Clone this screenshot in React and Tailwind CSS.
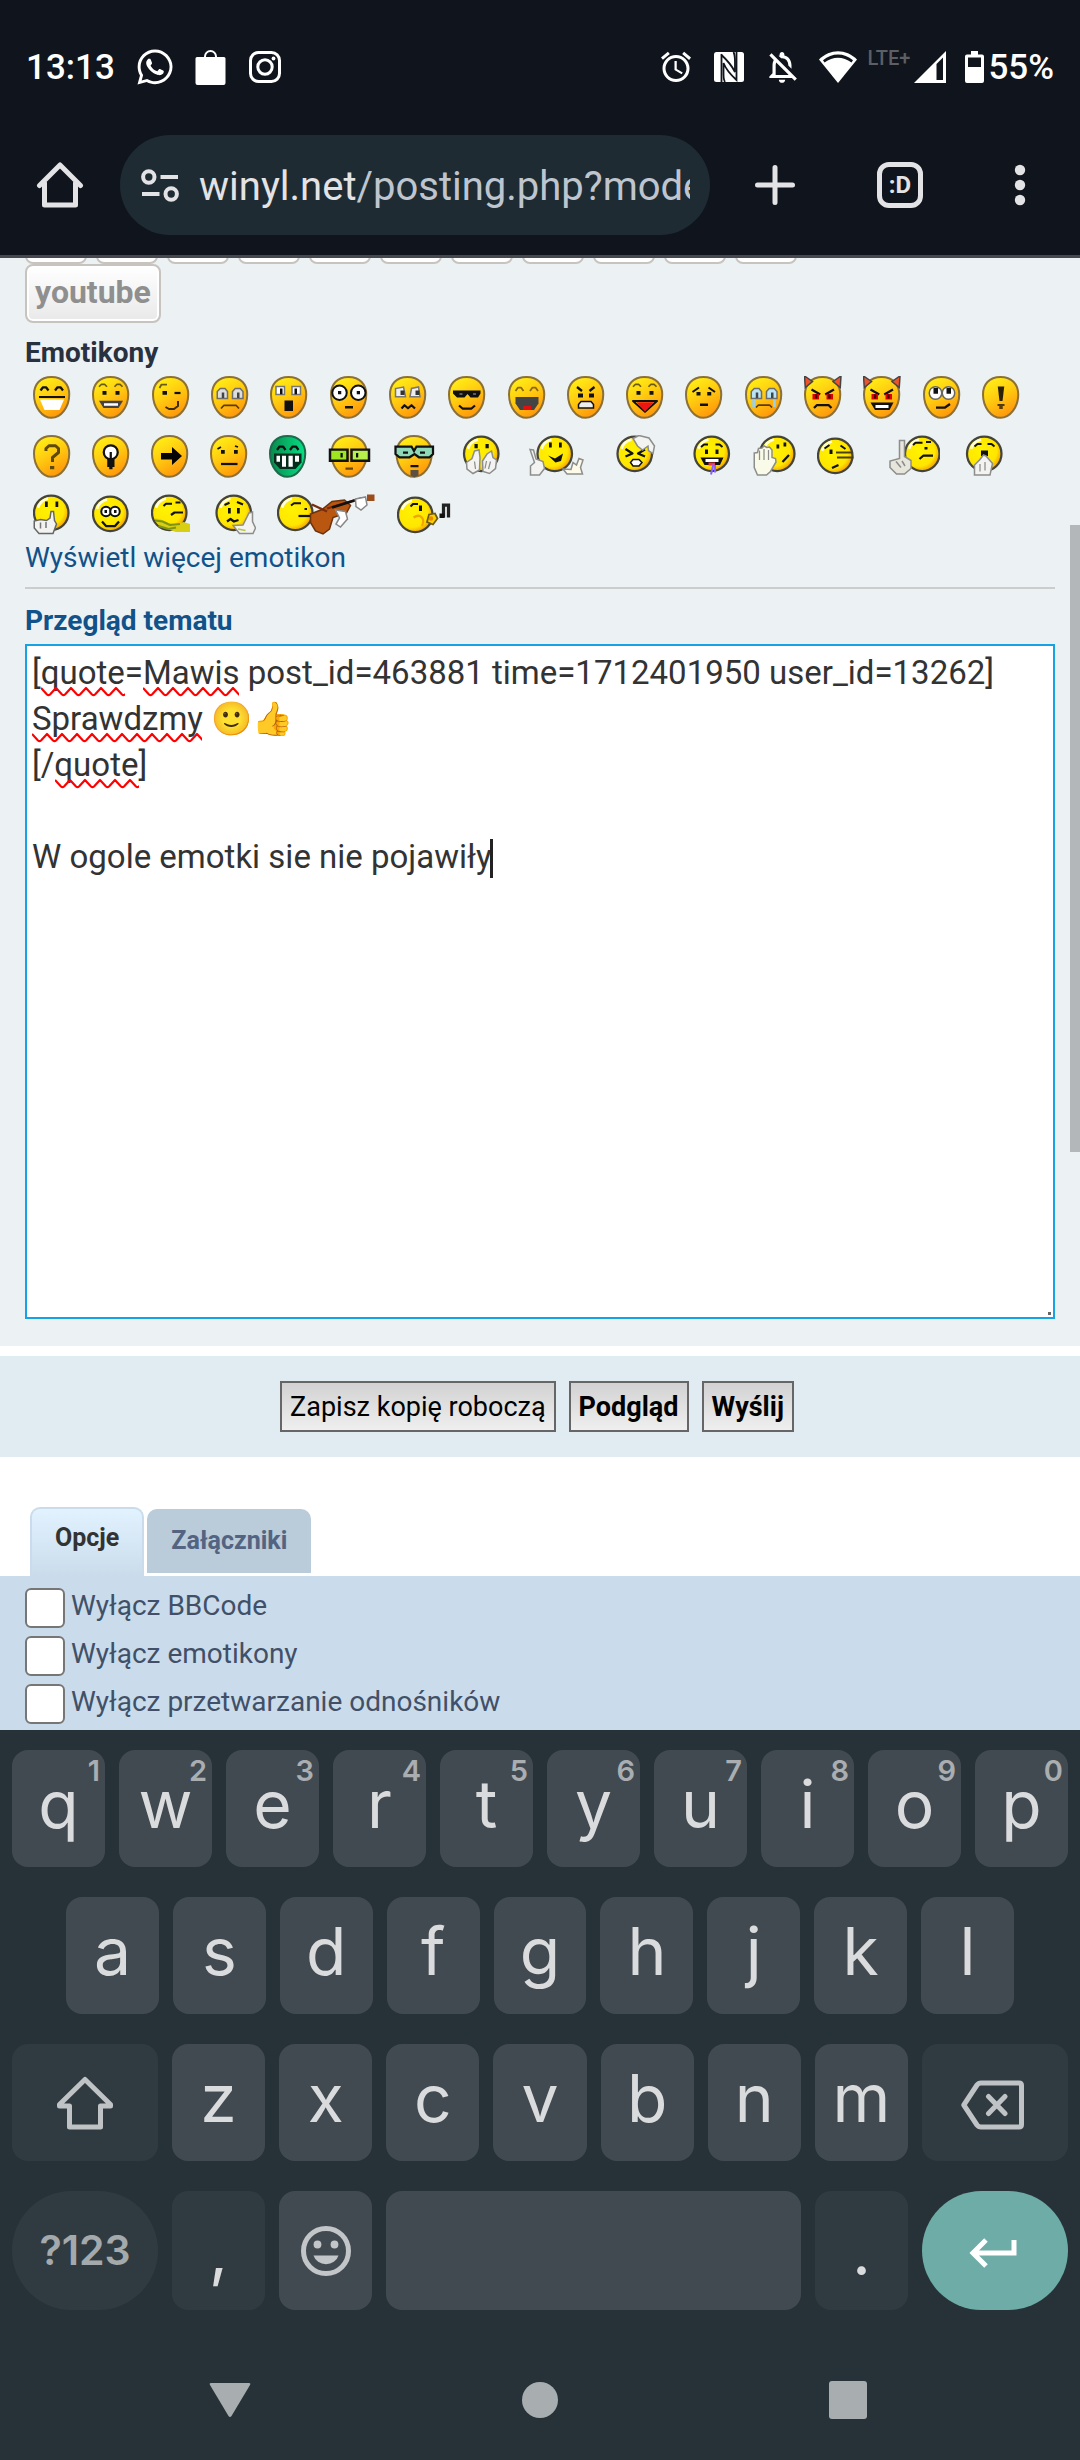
import React from 'react';
import { MdAlarm, MdOutlineNotificationsOff } from 'react-icons/md';
import { FaWhatsapp } from 'react-icons/fa';

/* ---------- emoticons, drawn on a grid whose unit is 2.5px ---------- */

const K = '#111';
const Box = ({ x, y, w, h, c = K }) => <rect x={x} y={y} width={w} height={h} fill={c} />;
const Line = ({ d, c = K, w = 0.9 }) => (
  <path d={d} fill="none" stroke={c} strokeWidth={w} strokeLinejoin="round" />
);
const Fill = ({ d, c = K, s = 'none' }) => <path d={d} fill={c} stroke={s} strokeWidth="0.6" />;

const Egg = ({ children, green, x = 0 }) => (
  <g transform={`translate(${x} 0)`}>
    <path
      d="M7.4 .4C12 .4 14.5 3.4 14.5 7.4 14.5 12.4 11.2 16.7 7.4 16.7 3.6 16.7 .4 12.4 .4 7.4 .4 3.4 2.8 .4 7.4 .4Z"
      fill={green ? 'url(#green)' : 'url(#egg)'}
      stroke={green ? '#1c6b4a' : '#8d7036'}
      strokeWidth="0.8"
    />
    {children}
  </g>
);

const Ball = ({ x = 0, y = 0, children }) => (
  <g transform={`translate(${x} ${y})`}>
    <circle cx="7.3" cy="7.5" r="6.9" fill="url(#ball)" stroke="#45443a" strokeWidth="0.9" />
    <path d="M2 5.5C2.6 3.6 4 2.3 6 1.8" stroke="#fffde0" strokeWidth="1" fill="none" />
    {children}
  </g>
);

const Eyes = ({ y = 6, w = 1.6 }) => (
  <>
    <Box x={4.2} y={y} w={w} h={1.5} />
    <Box x={9.4} y={y} w={w} h={1.5} />
  </>
);
const Brows = ({ y = 4.3, c = '#6b5a14' }) => (
  <Line c={c} d={`M2.8 ${y}l1-1h1.2l1 1M9 ${y}l1-1h1.2l1 1`} w={0.7} />
);
const RoundEyes = ({ c = '#ddd' }) => (
  <>
    <Fill d="M2.5 9V6.2L3.7 5H5.6L6.6 6.2V9Z" c={c} s="#6d6d6d" />
    <Fill d="M8.6 9V6.2L9.7 5H11.7L12.8 6.2V9Z" c={c} s="#6d6d6d" />
    <Box x={4.3} y={6.6} w={1} h={2.2} c="#444" />
    <Box x={10.4} y={6.6} w={1} h={2.2} c="#444" />
  </>
);
const Horns = () => (
  <>
    <Fill d="M.2 0L.5 4.6 3.4 2.2Z" c="#f0532a" s="#444" />
    <Fill d="M14.8 0L14.5 4.6 11.6 2.2Z" c="#f0532a" s="#444" />
    <Line d="M3 5.4L6.5 7.4M12 5.4L8.5 7.4" w={0.9} />
    <Box x={3.4} y={7.2} w={2.6} h={2.2} c="#e00000" />
    <Box x={9} y={7.2} w={2.6} h={2.2} c="#e00000" />
    <Box x={4.4} y={7.4} w={0.9} h={1.6} c="#300" />
    <Box x={9.7} y={7.4} w={0.9} h={1.6} c="#300" />
  </>
);

const rowOne = [
  ['Bardzo szczęśliwy', <Egg key="e"><Line d="M3 5.8l1-1.3h1.2l1 1.3M8.8 5.8l1-1.3h1.2l1 1.3" /><Line d="M2.4 8.4H12.8" w={0.8} /><Fill d="M2.8 9.4H12.4L10.6 13.6H4.6Z" c="#fff" /></Egg>],
  ['Uśmiech', <Egg key="e"><Brows /><Eyes /><Fill d="M2.8 9.9H12.4L10.6 12.8H4.6Z" c="#444" /><Box x={4.8} y={10.9} w={5.6} h={1} c="#fff" /></Egg>],
  ['Oczko', <Egg key="e"><Line d="M3 4.8l.8-1.4H6" w={0.7} c="#6b5a14" /><Box x={4.2} y={6} w={1.8} h={1.5} /><Line d="M9 6.8h2.4" /><Line d="M5.4 12.4l1.4.8h2l1.600-1.200V10" w={0.8} c="#3d2c05" /></Egg>],
  ['Smutny', <Egg key="e"><RoundEyes /><Line d="M4 13l1.2-1.3h4.8L11.2 13" w={0.7} c="#5b3c08" /></Egg>],
  ['Zaskoczony', <Egg key="e"><Fill d="M2.4 7.4V4.2H5.8V7.4Z" c="#fff" s="#777" /><Fill d="M8.8 7.4V4.2H12.2V7.4Z" c="#fff" s="#777" /><Box x={4} y={5} w={1} h={2.3} /><Box x={9.8} y={5} w={1} h={2.3} /><Box x={5.8} y={9.8} w={3.4} h={4.2} /></Egg>],
  ['Zszokowany', <Egg key="e"><circle cx="3.8" cy="6.7" r="2.9" fill="#fff" stroke={K} strokeWidth=".8" /><circle cx="11.3" cy="6.7" r="2.9" fill="#fff" stroke={K} strokeWidth=".8" /><Box x={3.2} y={6} w={1.3} h={1.3} /><Box x={10.7} y={6} w={1.3} h={1.3} /><Box x={6} y={12} w={3.2} h={1} /></Egg>],
  ['Zmieszany', <Egg key="e"><Fill d="M2.6 8.3V5L5.8 4.4 6.6 8.3Z" c="#eee" s="#777" /><Fill d="M8.4 8.3L9 5 11.8 4.4 12.4 8.3Z" c="#eee" s="#777" /><Box x={4.6} y={5.8} w={1.6} h={1.8} c="#333" /><Box x={10.6} y={5.8} w={1.6} h={1.8} c="#333" /><Line d="M5 13l1.2-1.3 1.4 1.2 1.4-1.2L10.4 13" /></Egg>],
  ['Wyluzowany', <Egg key="e"><Fill d="M2 5.8H13V7L12 8.6H9L7.8 7.2 6.6 8.6H3.6L2 7Z" /><Line d="M4.6 7.2h1.2M10 7.2h1.2" c="#777" w={0.6} /><Line d="M4.4 11.8l1.4 1.2h3.6l1.4-1.2" /></Egg>],
  ['Śmieje się', <Egg key="e"><Line d="M3 6l1-1.4h1.2l1 1.4M8.8 6l1-1.4h1.2l1 1.4" c="#8a6710" w={0.7} /><Fill d="M3 8.4H12.2V11L10.4 13.6H4.8L3 11Z" c="#444" /><Box x={6} y={12} w={3.4} h={1.6} c="#e01010" /></Egg>],
  ['Zły', <Egg key="e"><Line d="M4 4.4l2 1.6M11 4.4L9 6" /><Box x={4.4} y={7} w={2} h={1.6} /><Box x={8.8} y={7} w={2} h={1.6} /><Fill d="M4.6 12.8V11.4L5.6 10.2H9.6L10.6 11.4V12.8Z" c="#eee" s={K} /></Egg>],
  ['Pokazuje język', <Egg key="e"><Brows /><Eyes /><Line d="M2.8 10h9.600L7.600 14.300Z" w={0.8} /><Fill d="M4.200 10.500H11.200L7.600 14.200Z" c="#f01515" /></Egg>],
  ['Zawstydzony', <Egg key="e"><Line d="M3 6.4L5.6 4.6M12 6.4L9.4 4.6" w={0.8} /><Box x={4.6} y={6.4} w={1.6} h={1.4} /><Box x={8.9} y={6.4} w={1.6} h={1.4} /><Box x={6} y={11} w={3.2} h={1} /></Egg>],
  ['Płacze', <Egg key="e"><RoundEyes c="#b9e4f5" /><Line d="M4.4 12.6l1-1h4.4l1 1" w={0.7} c="#5b3c08" /><Box x={2.9} y={9.4} w={1.1} h={3} c="#9ccfe8" /><Box x={11.2} y={9.4} w={1.1} h={3} c="#9ccfe8" /></Egg>],
  ['Bardzo zły', <Egg key="e"><Horns /><Line d="M4 12.8l1.2-1.2h4.6l1.2 1.2" /></Egg>],
  ['Pokręcony', <Egg key="e"><Horns /><Fill d="M3 10.6H12.2L10.6 13.6H4.8Z" /><Box x={5} y={11.6} w={5.2} h={1.2} c="#fff" /></Egg>],
  ['Przewraca oczami', <Egg key="e"><circle cx="5" cy="6.8" r="2.5" fill="#fff" stroke="#666" strokeWidth=".6" /><circle cx="10.2" cy="6.8" r="2.5" fill="#fff" stroke="#666" strokeWidth=".6" /><Box x={4.2} y={4.8} w={1.8} h={2.3} /><Box x={9.4} y={4.8} w={1.8} h={2.3} /><Line d="M5.2 12.6h3.6l2-1.4" /></Egg>],
  ['Wykrzyknik', <Egg key="e"><Fill d="M6.3 4.2H8.9L8.2 10H7Z" c="#2a2005" /><Line d="M6.2 11.6h2.8" w={0.6} /><Box x={6.9} y={11.6} w={1.4} h={1.6} c="#5b3c08" /></Egg>],
];

const glove = '#f3f3f1';
const edge = '#8d8d8b';

/* label, width in px, drawing */
const rowTwo = [
  ['Pytanie', 38, <Egg key="e"><Line d="M5.2 6.4V5.4L6.4 4.3H9L10.2 5.4V7L7.8 9V10.8" c="#5f4a05" w={1.2} /><Box x={6.8} y={12.4} w={1.7} h={1.3} c="#5f4a05" /></Egg>],
  ['Pomysł', 38, <Egg key="e"><circle cx="7.5" cy="6.9" r="2.8" fill="#fff" stroke={K} strokeWidth=".9" /><Line d="M7.5 6.8V10" /><Box x={6.1} y={9.4} w={2.9} h={3.4} /><Box x={6.9} y={12.8} w={1.3} h={0.9} /></Egg>],
  ['Strzałka', 38, <Egg key="e"><Fill d="M4 7.2H8.4V4.8L12.4 8.4 8.4 12V9.8H4Z" c="#050505" /></Egg>],
  ['Neutralny', 38, <Egg key="e"><Line d="M3 5.6l1.4-.8M10 4.4l1.2.4" w={0.7} /><Box x={4.4} y={6} w={1.5} h={1.5} /><Box x={9.6} y={6} w={1.5} h={1.5} /><Line d="M4.4 11.6h6.6" /></Egg>],
  ['Mr. Green', 38, <Egg key="e" green><Line d="M3.2 6l1-1.4h1.4l1 1.4M8.4 6l1-1.4h1.4l1 1.4" /><Fill d="M2 7.4H13V11L10.6 13.6H4.4L2 11Z" c="#062c1c" /><path d="M3 8.3h1.4v2.4H3zM5.2 8.3h1.6v4.4H5.2zM7.8 8.3h1.7v4.4H7.8zM10.4 8.3h1.6v2.4h-1.6z" fill="#fff" /></Egg>],
  ['Geek', 44, <g key="e"><Egg x={1} /><Box x={0.3} y={5.4} w={8} h={5.4} /><Box x={8.9} y={5.4} w={8} h={5.4} /><Box x={1.3} y={6.3} w={6} h={3.5} c="#9fe620" /><Box x={9.9} y={6.3} w={6} h={3.5} c="#b7f04c" /><Box x={5} y={7.2} w={0.9} h={1.8} /><Box x={11.2} y={7.2} w={0.9} h={1.8} /><Box x={7} y={13} w={3} h={0.9} c="#6b4510" /></g>],
  ['Nadgeek', 44, <g key="e"><Egg x={1} /><path d="M1 4.6H7.4L8.4 6.4 9.4 4.6H16V7.6L14.6 8.9H10.4L8.6 7.6 6.6 8.9H2.6L1 7.6Z" fill="#8fd8b8" stroke={K} strokeWidth=".9" /><Box x={4} y={6.6} w={2} h={0.9} /><Box x={10.8} y={6.6} w={2} h={0.9} /><Box x={7} y={12} w={3.2} h={0.9} /><Fill d="M7 14H10.2V16.2L8.6 17 7 16.2Z" c="#5b5142" /></g>],
  ['Wstyd', 48, <Ball key="e" x={2}><Box x={4.6} y={3.6} w={1.3} h={1.7} /><Box x={9} y={3.6} w={1.3} h={1.7} /><Fill d="M4.6 6.4L6.4 6 6.8 9 6.6 14 4 15.4 1.6 13.6 1.4 11 3.6 9.4Z" c={glove} s={edge} /><Fill d="M11.4 6.4L9.6 7.6 7.8 10.4 8 14.6 10.6 15.4 13 13.4 13.4 10 12 9Z" c={glove} s={edge} /><Line d="M9.4 10.4l-.6 3M11 10.6l-.8 3M4.6 10.6l.4 3" c={edge} w={0.5} /></Ball>],
  ['Radość', 60, <g key="e"><Ball x={3.8}><Box x={5} y={3} w={1.1} h={2} /><Box x={9} y={3} w={1.1} h={2} /><Fill d="M4.6 8.2L7.4 9.4 10.6 7.4 9.8 10.4 7.6 11Z" /></Ball><Fill d="M1.2 5.8L2.6 6 3.6 9.6 6.4 10.6 7 13.4 5 16H1.4V12.4L3 11Z" c={glove} s={edge} /><Fill d="M20.8 9.4L22.4 10 21.4 13 22.2 15.6H16L14.4 13.6 17.6 13.8 18.4 11 19.8 12Z" c="#fdfbe8" s={edge} /></g>],
  ['Ból głowy', 53, <Ball key="e" x={3.4}><Line d="M3.6 5.6L6.4 7.4 3.6 8.6M11.4 5.8L8.6 7.4 11.4 8.6" /><Fill d="M5.6 11L6.6 9.8H9L10.2 11 9 12.4H6.6Z" c="#fff" s={K} /><Fill d="M6.6 1.4L9 .2 13 1.2 15.2 4.4 14.6 7.4 12.8 6.2 12.6 4.4 10.4 6 8.4 4.4Z" c={glove} s={edge} /></Ball>],
  ['Ślini się', 50, <Ball key="e" x={4.6}><Line d="M3 4.8l1.2-1h1.6M8.8 3.8h1.6l1.2 1" w={0.8} /><Box x={4.6} y={5.8} w={1.2} h={1.8} /><Box x={8.8} y={5.8} w={1.2} h={1.8} /><Fill d="M2.8 9H12L10.6 12H4.4Z" /><Box x={4.8} y={9.6} w={5.2} h={1.2} c="#fff" /><Box x={6} y={11} w={2.6} h={1.2} c="#f33" /><Line d="M8 11.6L7 15.8M8.6 12v3" c="#8a63ff" w={0.8} /></Ball>],
  ['Cześć', 43, <g key="e"><Ball x={2.4}><Box x={7} y={3.8} w={1.1} h={1.6} /><Box x={9.8} y={3} w={1.1} h={1.6} /><Line d="M9.4 10.8L12 8" /></Ball><Fill d="M.5 7.2L1.8 7 2.2 5.4 3.6 5.2 4.4 4.4 5.6 5 6.6 4.8 7.6 6V9L9 9.4 9.2 10.8 7 14.6 5.4 16H1.8L.5 13Z" c="#fafae9" s={edge} /><Line d="M2.6 6.2V10M4.4 5.6V10M6.2 6V10" c={edge} w={0.5} /></g>],
  ['Podejrzliwy', 38, <Ball key="e" y={0.8}><Line d="M3 4.6l2-1.4M9.4 3.4l2 1.4" w={0.8} /><Box x={5} y={5} w={1.2} h={1.8} /><Line d="M7.6 6.2h6.4M8 8.2h6.6" c="#4b400b" w={0.8} /><Line d="M6 12.4l2.6-1.2" /></Ball>],
  ['Uwaga', 64, <g key="e"><Ball x={11.2}><Line d="M3.6 4l1-.9h2.8M8.8 2.8h2" w={0.8} /><Box x={8.2} y={4.8} w={1.2} h={1} /><Line d="M6.2 9.6l1.6-1.4h3.8" /></Ball><Fill d="M9.4 2.2H11.4V8.6L14 10.2V13.4L11.4 15.6H8.2L5.6 13V10.4L9.4 9.4Z" c="#e6e6dc" s={edge} /><Line d="M8 10.6l2 2.4M10.4 10.4l1.2 2" c={edge} w={0.6} /></g>],
  ['Ziewa', 44, <Ball key="e" x={2}><Line d="M3.4 4.6l1.2-1h1.6M8.6 3.6h1.6l1.2 1" w={0.8} /><Box x={6} y={6.2} w={2.8} h={2.2} /><Fill d="M7 8L8 8.4 10.6 11.4 9.6 16H3.4V12L5.4 10Z" c={glove} s={edge} /><Line d="M5.6 11.6v3M7.6 10.8v3.4" c={edge} w={0.5} /></Ball>],
];

const rowThree = [
  ['Cicho', 38, <g key="e"><Ball><Box x={4.8} y={3} w={1.1} h={2.2} /><Box x={9} y={3} w={1.1} h={2.2} /></Ball><Fill d="M7.2 7H8.2L8.6 10.6 9.4 12 8 15.8H2.4L.5 13.6V10.8L3 10.2 5.4 10.6 6.8 9.6Z" c={glove} s="#666" /><Line d="M3 11.4v2.4M5.2 11.2v2.4" c="#777" w={0.6} /></g>],
  ['Zadowolony', 38, <Ball key="e" y={0.4}><circle cx="5.6" cy="6.6" r="1.9" fill="#fff" stroke={K} strokeWidth=".8" /><circle cx="9.2" cy="6.6" r="1.9" fill="#fff" stroke={K} strokeWidth=".8" /><Box x={5} y={6} w={1} h={1.2} /><Box x={8.8} y={6} w={1} h={1.2} /><Line d="M4 10.6l1.6 1.8h3.6L10.8 10.6" /></Ball>],
  ['Myśli', 41, <g key="e"><Ball><Line d="M5 4.8l1-.9h2.4M9.8 3.4h2" w={0.8} /><Line d="M8 8.4l1.4-1h3.4" /></Ball><Fill d="M1.2 9.600L4 10.200 7 11.600 10 12 13 11.200 15.600 12V15.200H10L3.600 13Z" c="#d8cf12" /><Line d="M1.600 10.600l3 .4 3 1.400 4-.4M3 12.800l4 1.200 3-.6" c="#7f9414" w={0.8} /></g>],
  ['Hmm', 43, <g key="e" transform="translate(1 0)"><Ball><Line d="M3.6 4.4l2-.9M8.6 3.2l2.4 1" w={0.8} /><Box x={5} y={5.6} w={1.1} h={2.2} /><Box x={8.6} y={5.6} w={1.1} h={2.2} /><Line d="M4.6 11l1.4-1 1.4 1 1.8-.6" /></Ball><Fill d="M13.4 7.6L14.8 7.2V11L16 13.6 15 15.8H9.6L7 12.6 11 12.4Z" c={glove} s={edge} /><Line d="M9 14l3 .6" c="#b9c34a" w={0.6} /></g>],
  ['Skrzypek', 99, <g key="e"><Ball><Line d="M5.6 4.6l1.2-.9h2.8M11 6h1" w={0.8} /><Line d="M8.6 8.8h5" /></Ball><Fill d="M13.4 8L18 6.2 22 3 27 2.4 29.4 4.6 27.8 7.6 22.4 9.4 21 14 18.4 16 15.4 14.8 13.4 11.4Z" c="#b9560f" s="#6c330b" /><Line d="M14 4.2L20 7M20 5.8L34 1.6" c="#7a2c0e" w={0.9} /><Line d="M22 5.4L31 2.6" c={K} w={1.1} /><Fill d="M23.4 6.4L27.4 7 28.2 10 25.4 13.2 23.6 12 25 9.6Z" c="#fff" s="#888" /><Fill d="M31.4 2L35.4 1.2 36 4.4 33.6 6.4 31.6 5Z" c="#fff" s="#888" /><Box x={36} y={0.2} w={3} h={2.6} c="#9c4d1c" /></g>],
  ['Gwiżdże', 54, <g key="e"><Ball y={0.8}><Line d="M5.4 4.2l1-1h2" w={0.8} /><Box x={8.8} y={3.8} w={1.2} h={2.2} /><path d="M12.8 7.4L15.2 7 16.2 9 14.4 11.4 12 10.4Z" fill="#ffd000" stroke="#6b5a10" strokeWidth=".7" /><circle cx="13.6" cy="9" r=".9" fill="#e98a00" /><path d="M6.6 8.6C9.4 6.8 11.4 9 10 12" fill="none" stroke="#f2a700" strokeWidth=".9" /></Ball><path d="M18.600 9.400V4.400H20.600V9.400" fill="none" stroke="#222" strokeWidth="1.300" /><Box x={17} y={7.8} w={2} h={1.8} /></g>],
];

const Smiley = ({ label, w, children }) => (
  <button type="button" aria-label={label} className="block shrink-0">
    <svg width={w} height="43" viewBox={`0 0 ${w / 2.5} 17.2`} className="block">
      {children}
    </svg>
  </button>
);

const Gradients = () => (
  <svg width="0" height="0" className="absolute" aria-hidden="true">
    <defs>
      <linearGradient id="egg" x1="0.25" y1="0" x2="0.75" y2="1">
        <stop offset="0" stopColor="#fff016" />
        <stop offset="0.45" stopColor="#ffcb10" />
        <stop offset="1" stopColor="#ff900a" />
      </linearGradient>
      <linearGradient id="green" x1="0" y1="0.5" x2="1" y2="0.5">
        <stop offset="0" stopColor="#088a4c" />
        <stop offset="1" stopColor="#06e086" />
      </linearGradient>
      <radialGradient id="ball" cx="0.4" cy="0.4" r="0.62">
        <stop offset="0" stopColor="#fff200" />
        <stop offset="0.75" stopColor="#ffe600" />
        <stop offset="1" stopColor="#f7a400" />
      </radialGradient>
    </defs>
  </svg>
);

/* ---------- status bar and browser bar ---------- */

const StatusBar = () => (
  <div className="flex items-center justify-between px-[26px] pt-[46px] text-white">
    <div className="flex h-[42px] items-center">
      <span className="pt-[2px] text-[35px] font-medium">13:13</span>
      <FaWhatsapp size={40} className="ml-5" />
      <svg width="31" height="35" viewBox="0 0 31 35" className="ml-5">
        <path d="M2 7H29a1.500 1.500 0 0 1 1.500 1.500V33a2 2 0 0 1-2 2H2.500a2 2 0 0 1-2-2V8.500A1.500 1.500 0 0 1 2 7Z" fill="#fff" />
        <path d="M10 8V6.500a5.500 5.500 0 0 1 11 0V8" fill="none" stroke="#fff" strokeWidth="2" />
      </svg>
      <svg width="32" height="32" viewBox="0 0 32 32" className="ml-[23px]" fill="none" stroke="#fff" strokeWidth="3">
        <rect x="1.500" y="1.500" width="29" height="29" rx="8" />
        <circle cx="16" cy="16" r="7.200" />
        <circle cx="24.500" cy="7.500" r="1.900" fill="#fff" stroke="none" />
      </svg>
    </div>
    <div className="flex h-[42px] items-center">
      <MdAlarm size={36} />
      <svg width="30" height="30" viewBox="0 0 30 30" className="ml-5">
        <rect width="30" height="30" rx="2.500" fill="#fff" />
        <g fill="none" stroke="#10141c" strokeWidth="1.800">
          <path d="M7.500 30V2M7 2.500C13 8 19 16 21 20V10C21 5 20.500 2 19.500 0" />
          <path d="M22.500 0V28C16 22 11 15 9.500 11V22C9.500 26 10 28.500 11 30" />
        </g>
      </svg>
      <MdOutlineNotificationsOff size={38} className="ml-[19px]" />
      <svg width="38" height="32" viewBox="0 0 38 32" className="ml-[18px]">
        <path d="M0 8.500C11-2.500 27-2.500 38 8.500L19 32Z" fill="#fff" />
        <path d="M4 9.300C13 1.500 25 1.500 34 9.300L32.500 11.500C24 5 14 5 5.500 11.500Z" fill="#10141c" />
      </svg>
      <span className="ml-[10px] self-start text-[20px] leading-[24px] font-medium text-[#5c5f64]">LTE+</span>
      <svg width="32" height="32" viewBox="0 0 32 32" className="ml-1">
        <path d="M0 32L32 0V32Z" fill="#fff" />
        <path d="M22.500 13V29H29V6.500Z" fill="#10141c" />
      </svg>
      <svg width="19" height="32" viewBox="0 0 19 32" className="ml-[19px]">
        <path d="M6 0H13V3.500H17A2 2 0 0 1 19 5.500V30A2 2 0 0 1 17 32H2A2 2 0 0 1 0 30V5.500A2 2 0 0 1 2 3.500H6Z" fill="#fff" />
        <rect x="3" y="6.500" width="13" height="9.500" fill="#10141c" />
      </svg>
      <span className="ml-1 pt-[2px] text-[35px] font-medium">55%</span>
    </div>
  </div>
);

const BrowserBar = () => (
  <div className="mt-[47px] flex h-[100px] items-center pl-9 text-[#e3e3e6]">
    <button type="button" aria-label="Strona główna" className="shrink-0">
      <svg width="48" height="48" viewBox="0 0 48 48" fill="none" stroke="currentColor" strokeWidth="5" strokeLinejoin="round" strokeLinecap="round" className="block">
        <path d="M3.500 24.500L24 4L44.500 24.500M8.500 22V44H39.500V22" />
      </svg>
    </button>
    <div className="ml-9 flex h-full min-w-0 flex-1 items-center rounded-full bg-[#1e2b33] pr-5 pl-[21px]">
      <svg width="38" height="33" viewBox="0 0 38 33" fill="none" stroke="currentColor" strokeWidth="4" className="shrink-0">
        <circle cx="7.800" cy="8" r="5.700" />
        <path d="M19.500 8H37M1 25H18.500" />
        <circle cx="30.200" cy="25" r="5.700" />
      </svg>
      <div className="ml-5 min-w-0 flex-1 overflow-hidden pt-[3px] text-[40px] leading-[60px] whitespace-nowrap">
        winyl.net<span className="text-[#bfc5ce]">/posting.php?mode</span>
      </div>
    </div>
    <div className="flex w-[370px] shrink-0 items-center">
      <button type="button" aria-label="Nowa karta" className="ml-11">
        <svg width="42" height="42" viewBox="0 0 42 42" stroke="currentColor" strokeWidth="5" strokeLinecap="round" className="block">
          <path d="M21 3.500V38.500M3.500 21H38.500" />
        </svg>
      </button>
      <button type="button" aria-label="Karty" className="ml-[81px] flex h-[46px] w-[46px] items-center justify-center rounded-[12px] border-[5px] border-current text-[24px] leading-[24px] font-bold">
        :D
      </button>
      <button type="button" aria-label="Menu" className="ml-[91px]">
        <svg width="12" height="42" viewBox="0 0 12 42" fill="currentColor" className="block">
          <circle cx="6" cy="6" r="5.200" />
          <circle cx="6" cy="21" r="5.200" />
          <circle cx="6" cy="36" r="5.200" />
        </svg>
      </button>
    </div>
  </div>
);

/* ---------- post editor ---------- */

const Squiggle = ({ width, className }) => {
  const waves = 'l6 6.500q1.500 1.200 3 0l6-6.500'.repeat(Math.ceil(width / 15));
  return (
    <svg width={width} height="11" viewBox={`0 0 ${width} 11`} className={className} aria-hidden="true">
      <path d={`M0 2${waves}`} fill="none" stroke="#f00" strokeWidth="2.200" strokeLinejoin="round" />
    </svg>
  );
};

const message = `[quote=Mawis post_id=463881 time=1712401950 user_id=13262]
Sprawdzmy 🙂👍
[/quote]

W ogole emotki sie nie pojawiły`;

const Editor = () => (
  <section className="bg-[#ecf1f4] px-[25px] pb-[27px]">
    <div className="flex h-[6px] items-end gap-[9px] overflow-hidden">
      {Array.from({ length: 11 }, (_, i) => (
        <button key={i} type="button" aria-label={`Styl ${i + 1}`} className="h-[30px] w-[62px] shrink-0 rounded-[8px] border-2 border-[#c7c3bf] bg-white" />
      ))}
    </div>
    <button type="button" className="block h-[59px] rounded-[8px] border-2 border-[#c7c3bf] bg-linear-to-b from-white to-[#e9e9e9] px-[8px] pb-[3px] text-[32px] leading-[50px] font-bold text-[#8f8f8f] shadow-[inset_0_0_0_2px_#fff]">
      youtube
    </button>
    <h2 className="mt-[13px] text-[28px] leading-[33px] font-bold text-[#28313f]">Emotikony</h2>
    <div className="mt-[7px] flex flex-col gap-4 pr-[35px] pl-2">
      <div className="flex justify-between">
        {rowOne.map(([label, art]) => (
          <Smiley key={label} label={label} w={38}>{art}</Smiley>
        ))}
      </div>
      <div className="flex gap-[21px]">
        {rowTwo.map(([label, w, art]) => (
          <Smiley key={label} label={label} w={w}>{art}</Smiley>
        ))}
      </div>
      <div className="flex gap-[21px]">
        {rowThree.map(([label, w, art]) => (
          <Smiley key={label} label={label} w={w}>{art}</Smiley>
        ))}
      </div>
    </div>
    <a href="#emotikony" className="mt-1 block text-[28px] leading-[34px] text-[#105289]">Wyświetl więcej emotikon</a>
    <hr className="mt-3 border-t-2 border-[#ccc]" />
    <h2 className="mt-4 text-[28px] leading-[32px] font-bold text-[#105289]">
      <label htmlFor="message">Przegląd tematu</label>
    </h2>
    <div className="relative mt-[7px]">
      <textarea
        id="message"
        spellCheck={false}
        defaultValue={message}
        className="block h-[675px] w-full resize-none overflow-hidden border-2 border-[#16a2e4] bg-white px-[5px] py-1 text-[33px] leading-[46px] text-[#333] outline-none"
      />
      <Squiggle width={84} className="absolute top-[42px] left-[16px]" />
      <Squiggle width={96} className="absolute top-[42px] left-[118px]" />
      <Squiggle width={170} className="absolute top-[88px] left-[7px]" />
      <Squiggle width={84} className="absolute top-[134px] left-[30px]" />
      <div className="absolute top-[195px] left-[465px] h-[39px] w-[3px] bg-[#222]" />
      <div className="absolute right-[4px] bottom-[4px] h-[3px] w-[3px] bg-[#666]" />
    </div>
  </section>
);

const FormButton = ({ children, bold }) => (
  <button type="button" className={`h-[51px] border-2 border-[#666] bg-linear-to-b from-[#d2d2d2] to-[#efefef] px-2 text-[27px] leading-[46px] text-black ${bold ? 'font-bold' : 'font-normal'}`}>
    {children}
  </button>
);

const Options = () => (
  <>
    <div className="mt-[50px] flex items-start pl-[30px]">
      <button type="button" className="h-[69px] rounded-t-[10px] border-2 border-b-0 border-[#cadceb] bg-linear-to-b from-[#e2f2ff] to-[#cadceb] px-[23px] pb-[10px] text-[25px] font-bold text-[#333]">
        Opcje
      </button>
      <button type="button" className="mt-[2px] ml-[3px] h-[64px] rounded-t-[10px] bg-[#bacbd9] px-6 text-[25px] font-bold text-[#536482]">
        Załączniki
      </button>
    </div>
    <section className="flex flex-col gap-2 bg-[#cadceb] px-[25px] pt-3 pb-[6px]">
      {['Wyłącz BBCode', 'Wyłącz emotikony', 'Wyłącz przetwarzanie odnośników'].map((t) => (
        <label key={t} className="flex h-10 text-[28px] leading-[36px] text-[#425067]">
          <input type="checkbox" className="mr-[6px] h-10 w-10 shrink-0 appearance-none rounded-[6px] border-2 border-[#767676] bg-white" />
          {t}
        </label>
      ))}
    </section>
  </>
);

/* ---------- keyboard ---------- */

const Key = ({ ch, num }) => (
  <button type="button" className="relative h-[117px] min-w-0 flex-1 rounded-[16px] bg-[#424a51] pb-[10px] text-center text-[66px] leading-[80px] text-[#dadbdd]">
    {ch}
    {num && <span className="absolute top-[3px] right-[5px] text-[29px] leading-[36px] font-semibold text-[#aaaeb1]">{num}</span>}
  </button>
);

const Keyboard = () => (
  <section aria-label="Klawiatura" className="flex flex-1 flex-col gap-[30px] bg-[#263238] pt-5 font-[Inter,sans-serif]">
    <div className="flex gap-[14px] px-3">
      {[...'qwertyuiop'].map((c, i) => <Key key={c} ch={c} num={String((i + 1) % 10)} />)}
    </div>
    <div className="flex gap-[14px] px-[66px]">
      {[...'asdfghjkl'].map((c) => <Key key={c} ch={c} />)}
    </div>
    <div className="flex gap-[14px] px-3">
      <button type="button" aria-label="Shift" className="flex w-[146px] items-center justify-center rounded-[16px] bg-[#303b41]">
        <svg width="58" height="56" viewBox="0 0 58 56" fill="none" stroke="#bfc3c6" strokeWidth="5" strokeLinejoin="round">
          <path d="M29 4.500L54.500 29.500V31H44.500V52H13.500V31H3.500V29.500Z" />
        </svg>
      </button>
      {[...'zxcvbnm'].map((c) => <Key key={c} ch={c} />)}
      <button type="button" aria-label="Backspace" className="flex w-[146px] items-center justify-center rounded-[16px] bg-[#303b41] pr-1">
        <svg width="64" height="52" viewBox="0 0 64 52" fill="none" stroke="#bfc3c6" strokeWidth="5" strokeLinejoin="round" strokeLinecap="round" className="mt-1">
          <path d="M20 4H58Q60.500 4 60.500 6.500V45.500Q60.500 48 58 48H20Q17.500 48 16 46L2.800 26 16 6Q17.500 4 20 4ZM27.500 17.500L44 34.500M44 17.500L27.500 34.500" />
        </svg>
      </button>
    </div>
    <div className="flex h-[119px] gap-[14px] px-3">
      <button type="button" className="w-[146px] rounded-full bg-[#303b41] text-[41px] font-semibold text-[#a4a9ac]">?123</button>
      <button type="button" className="w-[93px] rounded-[16px] bg-[#303b41] text-[66px] leading-[80px] text-[#dadbdd]">,</button>
      <button type="button" aria-label="Emoji" className="flex w-[93px] items-center justify-center rounded-[16px] bg-[#424a51]">
        <svg width="50" height="50" viewBox="0 0 50 50" fill="#c3c6c9">
          <circle cx="25" cy="25" r="22.500" fill="none" stroke="#c3c6c9" strokeWidth="5" />
          <circle cx="16.500" cy="18.500" r="3.900" />
          <circle cx="33.500" cy="18.500" r="3.900" />
          <path d="M12.500 29.500H37.500A13 12 0 0 1 12.500 29.500Z" />
        </svg>
      </button>
      <button type="button" aria-label="Spacja" className="flex-1 rounded-[16px] bg-[#424a51]" />
      <button type="button" className="w-[93px] rounded-[16px] bg-[#303b41] text-[66px] leading-[80px] text-[#dadbdd]">.</button>
      <button type="button" aria-label="Enter" className="flex w-[146px] items-center justify-center rounded-full bg-[#6eaca7] pr-1">
        <svg width="48" height="30" viewBox="0 0 48 30" fill="none" stroke="#fff" strokeWidth="5" className="mt-1">
          <path d="M45 2V15H4M17 2L4 15L17 28" />
        </svg>
      </button>
    </div>
    <nav className="mt-10 flex h-10 items-center justify-between pr-[213px] pl-[209px]" aria-label="System">
      <button type="button" aria-label="Wstecz">
        <svg width="42" height="36" viewBox="0 0 42 36" className="block"><path d="M2 1H40Q42 1 41 3L22.500 34Q21 36 19.500 34L1 3Q0 1 2 1Z" fill="#a8adb0" /></svg>
      </button>
      <button type="button" aria-label="Ekran główny" className="h-9 w-9 rounded-full bg-[#a8adb0]" />
      <button type="button" aria-label="Ostatnie" className="h-[38px] w-[38px] rounded-[3px] bg-[#a8adb0]" />
    </nav>
  </section>
);

export default function App() {
  return (
    <div className="relative flex min-h-screen flex-col overflow-hidden bg-white font-[Roboto,sans-serif]">
      <Gradients />
      <header className="border-b-[3px] border-[#45484f] bg-[#10141c] pb-5">
        <StatusBar />
        <BrowserBar />
      </header>
      <main className="relative">
        <Editor />
        <div className="mt-[10px] flex items-center justify-center gap-[13px] bg-[#e1ebf2] py-[25px] pr-[6px]">
          <FormButton>Zapisz kopię roboczą</FormButton>
          <FormButton bold>Podgląd</FormButton>
          <FormButton bold>Wyślij</FormButton>
        </div>
        <Options />
        <div className="absolute top-[267px] right-0 h-[627px] w-[10px] bg-[#b3b7b9]" />
      </main>
      <Keyboard />
    </div>
  );
}
